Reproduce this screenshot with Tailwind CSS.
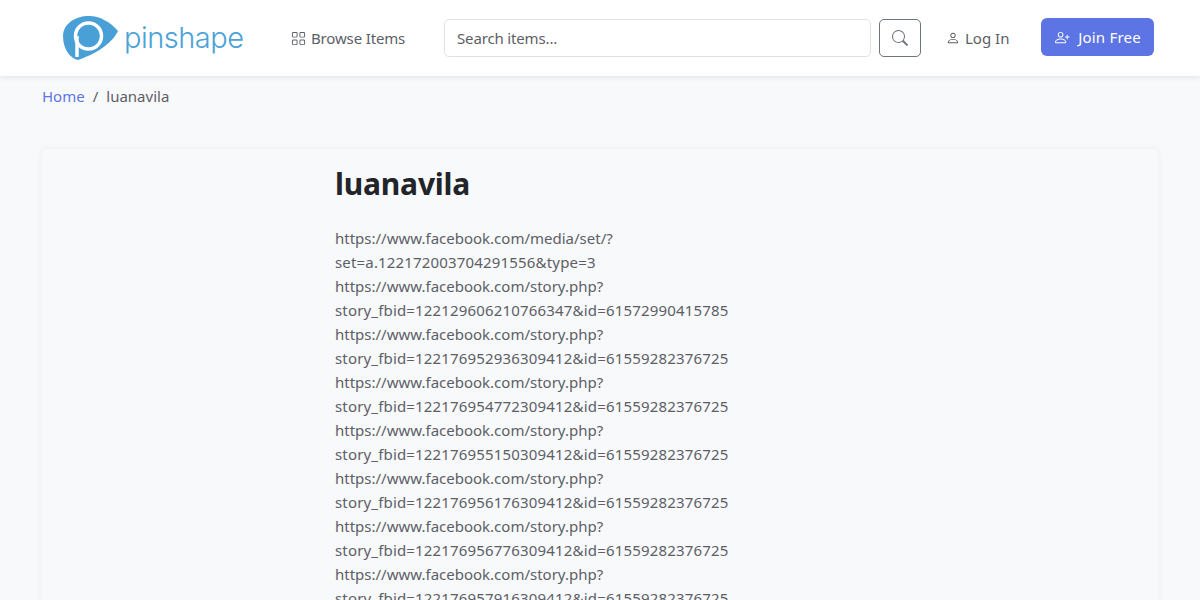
<!doctype html>
<html><head><meta charset="utf-8"><script src="https://cdn.jsdelivr.net/npm/@tailwindcss/browser@4"></script></head>
<body class="h-[600px] overflow-hidden bg-[#f8f9fb] font-['Noto_Sans',sans-serif] text-[15px] leading-6 text-[#5c6066]">
<header class="relative flex h-[76px] items-center bg-white pl-[63px] shadow-[0_1px_6px_rgba(0,0,0,0.1)]">
  <a class="flex w-[180px] shrink-0 items-center">
    <svg width="55" height="44" viewBox="0 0 55 44" class="shrink-0"><path d="M0 20C0 8 12 0 26 0C37 0 47 6 55 15C50 25 38 36 15 44C6 42 0 32 0 20Z" fill="#48a0d7"/><circle cx="25.500" cy="20" r="13" fill="none" stroke="#fff" stroke-width="3.500"/><path d="M14 20V41" stroke="#fff" stroke-width="3.500"/></svg>
    <span class="mb-[1px] ml-[6px] font-['Inter',sans-serif] text-[29px] font-light leading-none tracking-[-0.5px] text-[#4ba3d8]">pinshape</span>
  </a>
  <a class="ml-[48px] flex w-[114px] shrink-0 items-center gap-[5px] whitespace-nowrap tracking-[-0.15px]">
    <svg width="15" height="15" viewBox="0 0 16 16" fill="currentColor" class="shrink-0"><path d="M1 2.500A1.500 1.500 0 0 1 2.500 1h3A1.500 1.500 0 0 1 7 2.500v3A1.500 1.500 0 0 1 5.500 7h-3A1.500 1.500 0 0 1 1 5.500v-3zM2.500 2a.5.5 0 0 0-.5.5v3a.5.5 0 0 0 .5.5h3a.5.5 0 0 0 .5-.5v-3a.5.5 0 0 0-.5-.5h-3zm6.500.5A1.500 1.500 0 0 1 10.500 1h3A1.500 1.500 0 0 1 15 2.500v3A1.500 1.500 0 0 1 13.500 7h-3A1.500 1.500 0 0 1 9 5.500v-3zm1.500-.5a.5.5 0 0 0-.5.5v3a.5.5 0 0 0 .5.5h3a.5.5 0 0 0 .5-.5v-3a.5.5 0 0 0-.5-.5h-3zM1 10.500A1.500 1.500 0 0 1 2.500 9h3A1.500 1.500 0 0 1 7 10.500v3A1.500 1.500 0 0 1 5.500 15h-3A1.500 1.500 0 0 1 1 13.500v-3zm1.500-.5a.5.5 0 0 0-.5.5v3a.5.5 0 0 0 .5.5h3a.5.5 0 0 0 .5-.5v-3a.5.5 0 0 0-.5-.5h-3zm6.500.5A1.500 1.500 0 0 1 10.500 9h3a1.500 1.500 0 0 1 1.500 1.500v3a1.500 1.500 0 0 1-1.500 1.500h-3A1.500 1.500 0 0 1 9 13.500v-3zm1.500-.5a.5.5 0 0 0-.5.5v3a.5.5 0 0 0 .5.5h3a.5.5 0 0 0 .5-.5v-3a.5.5 0 0 0-.5-.5h-3z"/></svg>
    Browse Items
  </a>
  <div class="ml-[39px] flex h-[38px] w-[427px] shrink-0 items-center rounded-[5px] border border-[#dee2e6] px-3 tracking-[-0.15px]">Search items...</div>
  <button class="ml-2 flex h-[38px] w-[42px] shrink-0 items-center justify-center rounded-[5px] border border-[#6c757d]">
    <svg width="16" height="16" viewBox="0 0 16 16" fill="#6c757d"><path d="M11.742 10.344a6.500 6.500 0 1 0-1.397 1.398l3.850 3.850a1 1 0 0 0 1.415-1.414l-3.850-3.850zM12 6.500a5.500 5.500 0 1 1-11 0 5.500 5.500 0 0 1 11 0z"/></svg>
  </button>
  <a class="ml-[25px] flex w-[63px] shrink-0 items-center gap-[5px] whitespace-nowrap">
    <svg width="14" height="14" viewBox="0 0 16 16" fill="currentColor" class="shrink-0"><path d="M8 8a3 3 0 1 0 0-6 3 3 0 0 0 0 6zm2-3a2 2 0 1 1-4 0 2 2 0 0 1 4 0zm4 8c0 1-1 1-1 1H3s-1 0-1-1 1-4 6-4 6 3 6 4zm-1-.004c-.001-.246-.154-.986-.832-1.664C11.516 10.680 10.289 10 8 10c-2.290 0-3.516.680-4.168 1.332-.678.678-.830 1.418-.832 1.664h10z"/></svg>
    Log In
  </a>
  <a class="mb-[2px] ml-[32px] flex h-[38px] w-[113px] shrink-0 items-center justify-center gap-[7px] whitespace-nowrap rounded-[6px] bg-[#5d75e4] tracking-[0.2px] text-white">
    <svg width="17" height="15" viewBox="0 0 17 16" fill="currentColor" class="shrink-0"><path d="M6.500 8a3 3 0 1 0 0-6 3 3 0 0 0 0 6zm2-3a2 2 0 1 1-4 0 2 2 0 0 1 4 0zm4 8c0 1-1 1-1 1h-10s-1 0-1-1 1-4 6-4 6 3 6 4zm-1-.004c-.001-.246-.154-.986-.832-1.664C10.016 10.680 8.789 10 6.500 10c-2.290 0-3.516.680-4.168 1.332-.678.678-.830 1.418-.832 1.664h11z"/><path d="M13.500 5a.5.5 0 0 1 .5.5V7h1.500a.5.5 0 0 1 0 1H14v1.500a.5.5 0 0 1-1 0V8h-1.500a.5.5 0 0 1 0-1H13V5.500a.5.5 0 0 1 .5-.5z"/></svg>
    Join Free
  </a>
</header>
<nav class="flex gap-2 px-[42px] pt-2"><a class="text-[#5d75e4]">Home</a><span>/</span><span>luanavila</span></nav>
<main class="mx-[42px] mt-[41px] h-[500px] rounded-[6px] bg-[#f8f9fb] pl-[293px] pt-[17px] shadow-[0_0_8px_rgba(0,0,0,0.05)]">
  <h1 class="mb-[24px] text-[30px] font-bold leading-[36px] tracking-[-0.2px] text-[#212529]">luanavila</h1>
  <div class="whitespace-nowrap [&>span]:block [&>span]:tracking-[0.17px]">
    <div>https://www.facebook.com/media/set/?</div><span>set=a.122172003704291556&amp;type=3</span>
    <div>https://www.facebook.com/story.php?</div><span>story_fbid=122129606210766347&amp;id=61572990415785</span>
    <div>https://www.facebook.com/story.php?</div><span>story_fbid=122176952936309412&amp;id=61559282376725</span>
    <div>https://www.facebook.com/story.php?</div><span>story_fbid=122176954772309412&amp;id=61559282376725</span>
    <div>https://www.facebook.com/story.php?</div><span>story_fbid=122176955150309412&amp;id=61559282376725</span>
    <div>https://www.facebook.com/story.php?</div><span>story_fbid=122176956176309412&amp;id=61559282376725</span>
    <div>https://www.facebook.com/story.php?</div><span>story_fbid=122176956776309412&amp;id=61559282376725</span>
    <div>https://www.facebook.com/story.php?</div><span>story_fbid=122176957916309412&amp;id=61559282376725</span>
  </div>
</main>
</body></html>
